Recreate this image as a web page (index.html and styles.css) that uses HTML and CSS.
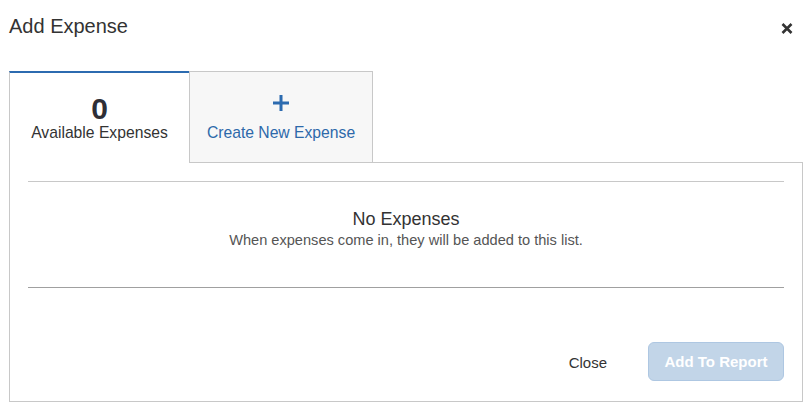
FILE: index.html
```html
<!DOCTYPE html>
<html lang="en">
<head>
<meta charset="utf-8">
<title>Add Expense</title>
<link rel="stylesheet" href="styles.css">
</head>
<body>
<div class="modal">
  <div class="modal-header">
    <h1 class="modal-title">Add Expense</h1>
    <button class="close-x" aria-label="Close">
      <svg width="12" height="11" viewBox="0 0 12 11"><path d="M1.5 1 L10.5 10 M10.5 1 L1.5 10" stroke="#333" stroke-width="2.6" stroke-linecap="butt"/></svg>
    </button>
  </div>
  <div class="tabs">
    <div class="tab tab-active">
      <div class="tab-count">0</div>
      <div class="tab-label">Available Expenses</div>
    </div>
    <div class="tab tab-new">
      <div class="tab-icon">
        <svg width="16" height="16" viewBox="0 0 16 16"><path d="M8 0 V16 M0 8 H16" stroke="#2c6bb0" stroke-width="3"/></svg>
      </div>
      <div class="tab-label tab-label-link">Create New Expense</div>
    </div>
    <div class="tab-filler"></div>
  </div>
  <div class="panel">
    <div class="empty">
      <div class="empty-title">No Expenses</div>
      <div class="empty-text">When expenses come in, they will be added to this list.</div>
    </div>
    <div class="footer">
      <button class="btn-link">Close</button>
      <button class="btn-primary" disabled>Add To Report</button>
    </div>
  </div>
</div>
</body>
</html>
```
FILE: styles.css
```css
html, body {
  margin: 0;
  padding: 0;
  background: #fff;
  font-family: "Liberation Sans", Arial, sans-serif;
  color: #333;
}
.modal {
  padding: 0 7px 0 9px;
}
.modal-header {
  display: flex;
  justify-content: space-between;
  align-items: flex-start;
  padding: 14px 10px 33px 0;
}
.modal-title {
  margin: 0;
  font-size: 20px;
  line-height: 24px;
  font-weight: normal;
  color: #333;
}
.close-x {
  border: 0;
  background: none;
  padding: 0;
  margin-top: 9px;
  width: 12px;
  height: 11px;
  display: flex;
}
.tabs {
  display: flex;
  height: 92px;
}
.tab {
  box-sizing: border-box;
  display: flex;
  flex-direction: column;
  align-items: center;
}
.tab-active {
  width: 180px;
  border-top: 2px solid #2c6bb0;
  border-left: 1px solid #c8c8c8;
  padding-top: 22px;
}
.tab-new {
  width: 184px;
  border: 1px solid #c8c8c8;
  background: #f7f7f7;
  padding-top: 23px;
}
.tab-filler {
  flex: 1;
  border-bottom: 1px solid #c8c8c8;
}
.tab-count {
  font-size: 30px;
  line-height: 28px;
  font-weight: bold;
  color: #2e2e36;
}
.tab-icon {
  height: 28px;
  display: flex;
  align-items: flex-start;
}
.tab-label {
  font-size: 15.7px;
  line-height: 20px;
  color: #333;
  white-space: nowrap;
}
.tab-label-link {
  color: #2d69aa;
}
.panel {
  border: 1px solid #c8c8c8;
  border-top: 0;
  height: 239px;
  box-sizing: border-box;
  padding: 18px 18px 0 18px;
}
.empty {
  border-top: 1px solid #c8c8c8;
  border-bottom: 1px solid #a0a0a0;
  padding: 27px 0 38px;
  text-align: center;
}
.empty-title {
  font-size: 18px;
  line-height: 20px;
  color: #333;
  margin-bottom: 2px;
}
.empty-text {
  font-size: 14.6px;
  line-height: 18px;
  color: #555;
}
.footer {
  display: flex;
  justify-content: flex-end;
  align-items: center;
  gap: 41px;
  margin-top: 54px;
}
.btn-link {
  border: 0;
  background: none;
  font-family: inherit;
  font-size: 15px;
  color: #333;
  padding: 0;
  margin-top: 2px;
}
.btn-primary {
  font-family: inherit;
  font-size: 15px;
  font-weight: bold;
  color: #fff;
  background: #c2d5e8;
  border: 1px solid #aec7e2;
  border-radius: 6px;
  height: 39px;
  width: 136px;
  padding: 0;
}
```
